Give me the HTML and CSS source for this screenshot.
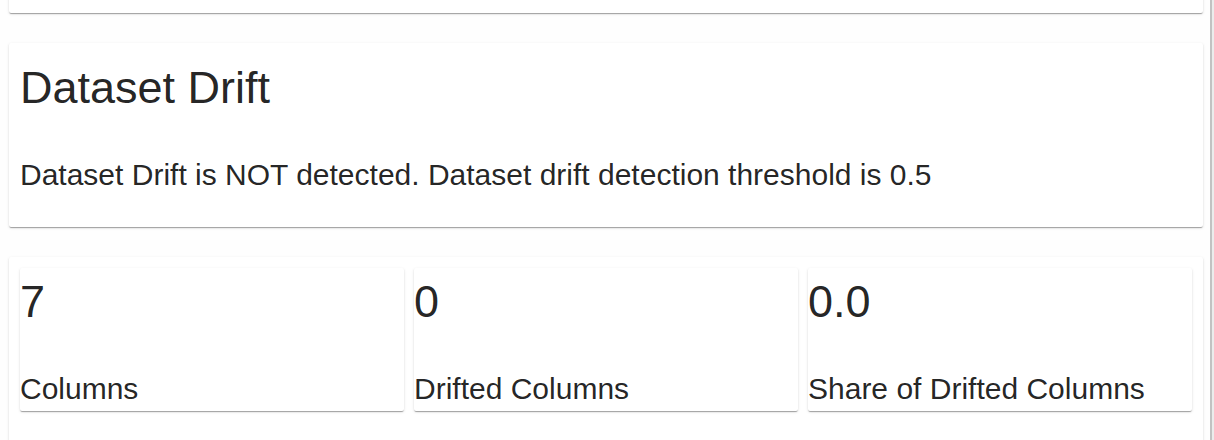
FILE: index.html
```html
<!DOCTYPE html>
<html lang="en">
<head>
<meta charset="utf-8">
<title>Dataset Drift</title>
<link rel="stylesheet" href="styles.css">
</head>
<body>
<div class="frame">
  <main class="report">
    <section class="card card-prev"></section>
    <section class="card card-drift">
      <h2 class="title">Dataset Drift</h2>
      <p class="summary">Dataset Drift is NOT detected. Dataset drift detection threshold is 0.5</p>
    </section>
    <section class="card card-counters">
      <div class="counter">
        <div class="counter-value">7</div>
        <div class="counter-label">Columns</div>
      </div>
      <div class="counter">
        <div class="counter-value">0</div>
        <div class="counter-label">Drifted Columns</div>
      </div>
      <div class="counter">
        <div class="counter-value">0.0</div>
        <div class="counter-label">Share of Drifted Columns</div>
      </div>
    </section>
  </main>
  <div class="scroll-edge"><span class="edge-dark"></span><span class="edge-light"></span></div>
</div>
</body>
</html>
```
FILE: styles.css
```css
html, body {
  margin: 0;
  padding: 0;
  background: #fefefe;
  font-family: "Liberation Sans", Arial, Helvetica, sans-serif;
  color: rgba(0, 0, 0, 0.87);
  overflow: hidden;
}

.frame {
  display: flex;
  height: 440px;
  overflow: hidden;
}

.report {
  width: 1210px;
  display: flex;
  flex-direction: column;
  gap: 30px;
}

.scroll-edge {
  display: flex;
  width: 4px;
}

.edge-dark {
  width: 2px;
  background: #c2c2c2;
}

.edge-light {
  width: 2px;
  background: #ececec;
}

.card {
  flex-shrink: 0;
  background: #fff;
  margin: 0 7px 0 9px;
  border-radius: 2px;
  box-shadow: 0px 2px 1px -1px rgba(0, 0, 0, 0.2),
              0px 1px 1px 0px rgba(0, 0, 0, 0.14),
              0px 1px 3px 0px rgba(0, 0, 0, 0.12);
}

.card-prev {
  height: 100px;
  margin-top: -87px;
}

.card-drift {
  padding: 19px 10px 35px 11px;
}

.title {
  margin: 0;
  font-size: 45px;
  font-weight: 400;
  line-height: 52px;
}

.summary {
  margin: 44px 0 0 0;
  font-size: 30px;
  line-height: 34px;
}

.card-counters {
  display: grid;
  grid-template-columns: repeat(3, 1fr);
  gap: 10px;
  padding: 11px 11px 60px 11px;
}

.counter {
  background: #fff;
  border-radius: 2px;
  padding: 8px 0 5px 0;
  box-shadow: 0px 2px 1px -1px rgba(0, 0, 0, 0.2),
              0px 1px 1px 0px rgba(0, 0, 0, 0.14),
              0px 1px 3px 0px rgba(0, 0, 0, 0.12);
}

.counter-value {
  font-size: 45px;
  line-height: 52px;
}

.counter-label {
  margin-top: 44px;
  font-size: 30px;
  line-height: 34px;
}
```
